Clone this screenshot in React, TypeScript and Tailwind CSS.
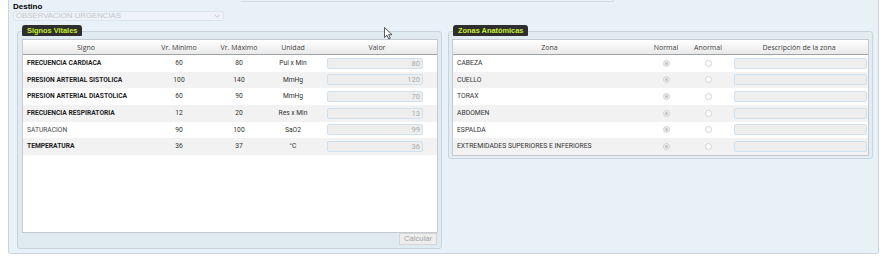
import React from "react";

const vitals = [
  { n: "FRECUENCIA CARDIACA", min: "60", max: "80", u: "Pul x Min", v: "80", b: true },
  { n: "PRESION ARTERIAL SISTOLICA", min: "100", max: "140", u: "MmHg", v: "120", b: true },
  { n: "PRESION ARTERIAL DIASTOLICA", min: "60", max: "90", u: "MmHg", v: "70", b: true },
  { n: "FRECUENCIA RESPIRATORIA", min: "12", max: "20", u: "Res x Min", v: "13", b: true },
  { n: "SATURACION", min: "90", max: "100", u: "SaO2", v: "99", b: false },
  { n: "TEMPERATURA", min: "36", max: "37", u: "°C", v: "36", b: true },
];

const zonas = ["CABEZA", "CUELLO", "TORAX", "ABDOMEN", "ESPALDA", "EXTREMIDADES SUPERIORES E INFERIORES"];

function Legend({ children }: { children: React.ReactNode }) {
  return (
    <div className="absolute top-[-7px] left-[4px] h-[11px] px-[5px] bg-[#2e2e2e] rounded-t-[3px] rounded-b-[1px] flex items-center font-['Liberation_Sans',sans-serif] font-bold text-[7.4px] leading-none text-[#c8ef2c] whitespace-nowrap">
      {children}
    </div>
  );
}

function Header({ cols }: { cols: { w: string; t: string }[] }) {
  return (
    <div className="flex h-[15px] bg-gradient-to-b from-white to-[#e9e9e9] border-b border-[#9fa3a6] font-['Open_Sans',sans-serif] text-[7px] text-[#444]">
      {cols.map((c, i) => (
        <div key={i} className={`${c.w} flex items-center justify-center leading-none`}>
          {c.t}
        </div>
      ))}
    </div>
  );
}

function Radio({ checked }: { checked: boolean }) {
  return (
    <div className={`w-[7px] h-[7px] rounded-full border border-[#d2d2d2] flex items-center justify-center ${checked ? "bg-[#eeeeee]" : "bg-white"}`}>
      {checked && <div className="w-[3px] h-[3px] rounded-full bg-[#c4c4c4]" />}
    </div>
  );
}

export default function App() {
  return (
    <div className="w-[885px] h-[258px] bg-white overflow-hidden relative font-['Roboto',sans-serif]">
      <div className="ml-[8px] w-[871px] h-[254px] bg-[#e9f1f8] border-x border-b border-[#cbd4dc] rounded-b-[3px] flex flex-col">
        <div className="flex items-start">
          <div className="pl-[4px] pt-[2px] flex flex-col">
            <div className="h-[9px] leading-[9px] font-['Liberation_Sans',sans-serif] font-bold text-[8px] text-black">Destino</div>
            <div className="w-[211px] h-[10px] border border-[#dde4ea] rounded-[2px] bg-[#edf3f8] flex items-center justify-between pl-[2px] pr-[3px]">
              <span className="font-['Liberation_Sans',sans-serif] text-[7.8px] leading-none text-[#c3c8cc]">OBSERVACION URGENCIAS</span>
              <svg width="6" height="4" viewBox="0 0 6 4"><path d="M0.5 0.8 L3 3.2 L5.5 0.8" fill="none" stroke="#c0c6cb" strokeWidth="0.9" /></svg>
            </div>
          </div>
          <div className="ml-[17px] w-[373px] h-[2px] border-b border-r border-[#d3dbe2] rounded-br-[2px]" />
        </div>

        <div className="flex items-start pl-[8px] gap-[6px] mt-[10px]">
          {/* Signos Vitales */}
          <div className="relative w-[425px] h-[218px] border border-[#c9d3dc] rounded-[3px] bg-[#e0eaf1] pt-[7px] pl-[4px] flex flex-col">
            <Legend>Signos Vitales</Legend>
            <div className="w-[416px] h-[194px] bg-white border border-[#c4cad0] flex flex-col">
              <Header
                cols={[
                  { w: "w-[126px]", t: "Signo" },
                  { w: "w-[60px]", t: "Vr. Mínimo" },
                  { w: "w-[60px]", t: "Vr. Máximo" },
                  { w: "w-[48px]", t: "Unidad" },
                  { w: "w-[120px]", t: "Valor" },
                ]}
              />
              {vitals.map((r, i) => (
                <div key={i} className={`flex h-[16.67px] items-center text-[6.7px] leading-none ${i % 2 === 1 ? "bg-[#f2f2f2]" : "bg-white"}`}>
                  <div className={`w-[126px] pl-[4px] whitespace-nowrap ${r.b ? "font-bold text-[#1e1e1e]" : "text-[#4a4a4a]"}`}>{r.n}</div>
                  <div className="w-[60px] text-center text-[#333]">{r.min}</div>
                  <div className="w-[60px] text-center text-[#333]">{r.max}</div>
                  <div className="w-[48px] text-center text-[#333]">{r.u}</div>
                  <div className="w-[120px] pl-[10px]">
                    <div className="w-[96px] h-[11px] rounded-[2px] border border-[#cfe1ef] bg-[#eeeeee] flex items-center justify-end pr-[2px] text-[7.6px] text-[#ababab]">
                      {r.v}
                    </div>
                  </div>
                </div>
              ))}
            </div>
            <div className="w-[416px] flex justify-end">
              <div className="mr-[1px] w-[38px] h-[12px] bg-[#eeeeee] border border-[#d6d6d6] flex items-center justify-center font-['Liberation_Sans',sans-serif] text-[7.6px] leading-none text-[#a3a3a3]">
                Calcular
              </div>
            </div>
          </div>

          {/* Zonas Anatómicas */}
          <div className="relative w-[425px] h-[128px] border border-[#c9d3dc] rounded-[3px] bg-[#e3ecf3] pt-[7px] pl-[3px] flex flex-col">
            <Legend>Zonas Anatómicas</Legend>
            <div className="w-[417px] bg-white border border-[#c4cad0] flex flex-col">
              <Header
                cols={[
                  { w: "w-[193px]", t: "Zona" },
                  { w: "w-[40px]", t: "Normal" },
                  { w: "w-[44px]", t: "Anormal" },
                  { w: "w-[138px]", t: "Descripción de la zona" },
                ]}
              />
              {zonas.map((z, i) => (
                <div key={i} className={`flex h-[16.67px] items-center text-[6.8px] leading-none ${i % 2 === 1 ? "bg-[#f2f2f2]" : "bg-white"}`}>
                  <div className="w-[193px] pl-[4px] whitespace-nowrap text-[#333]">{z}</div>
                  <div className="w-[40px] flex justify-center"><Radio checked /></div>
                  <div className="w-[44px] flex justify-center"><Radio checked={false} /></div>
                  <div className="w-[138px] pl-[4px]">
                    <div className="w-[133px] h-[11px] rounded-[2px] border border-[#cfe1ef] bg-[#eeeeee]" />
                  </div>
                </div>
              ))}
            </div>
          </div>
        </div>
      </div>

      {/* mouse cursor */}
      <svg className="absolute left-[384px] top-[27px]" width="9" height="13" viewBox="0 0 9 13">
        <path d="M0.5 0.5 L0.5 10.5 L3 8.2 L4.8 12 L6.3 11.3 L4.6 7.7 L8 7.7 Z" fill="white" stroke="#333" strokeWidth="0.8" strokeLinejoin="round" />
      </svg>
    </div>
  );
}
